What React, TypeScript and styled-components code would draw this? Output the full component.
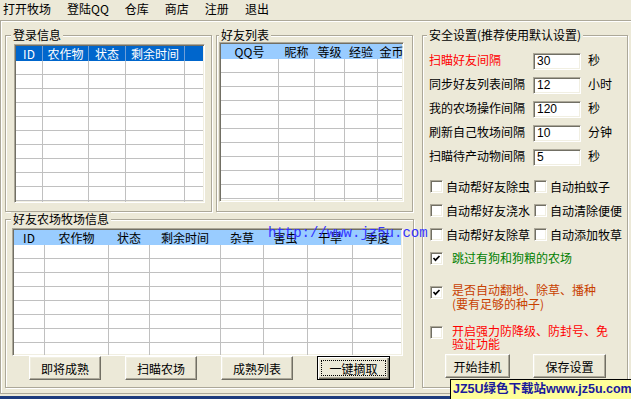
import React from "react";
import styled, { createGlobalStyle, css } from "styled-components";

const GlobalStyle = createGlobalStyle`
  html, body {
    margin: 0;
    padding: 0;
    background: #ece9d8;
  }
  body {
    font-family: "Noto Sans CJK SC", "Liberation Sans", sans-serif;
    font-size: 12px;
    color: #000;
  }
  * { box-sizing: border-box; }
`;

const sunken = css`
  border: 1px solid;
  border-color: #aca899 #fff #fff #aca899;
  box-shadow: inset 1px 1px #716f64, inset -1px -1px #f1efe2;
  background: #fff;
`;

type Col = { label: string; width: number };

const loginCols: Col[] = [
    { label: "ID", width: 27 },
    { label: "农作物", width: 46 },
    { label: "状态", width: 37 },
    { label: "剩余时间", width: 59 },
];

const friendCols: Col[] = [
    { label: "QQ号", width: 58 },
    { label: "昵称", width: 36 },
    { label: "等级", width: 30 },
    { label: "经验", width: 33 },
    { label: "金币", width: 28 },
];

const farmCols: Col[] = [
    { label: "ID", width: 31 },
    { label: "农作物", width: 64 },
    { label: "状态", width: 41 },
    { label: "剩余时间", width: 71 },
    { label: "杂草", width: 43 },
    { label: "害虫", width: 44 },
    { label: "干旱", width: 45 },
    { label: "季度", width: 50 },
];

const Window = styled.div`
  position: relative;
  width: 631px;
  height: 399px;
  display: flex;
  flex-direction: column;
  overflow: hidden;
`;

const MenuBar = styled.div`
  height: 20px;
  display: flex;
  gap: 16px;
  padding-left: 3px;
  line-height: 18px;
`;

const MenuItem = styled.span`
  white-space: nowrap;
`;

const Body = styled.div`
  height: 374px;
  flex: none;
  display: flex;
  padding: 7px 0 0 4px;
  border-top: 1px solid #aca899;
  border-left: 1px solid #aca899;
  border-bottom: 1px solid #aca899;
  box-shadow: inset 1px 1px #fff;
`;

const TaskEdge = styled.div`
  margin-top: 2px;
  height: 3px;
  background: #1d3b7d;
`;

const LeftCol = styled.div`
  width: 409px;
  flex: none;
  display: flex;
  flex-direction: column;
`;

const TopRow = styled.div`
  display: flex;
  gap: 4px;
  height: 184px;
`;

const Group = styled.fieldset<{ $w: number; $h: number }>`
  margin: 0;
  padding: 0;
  min-width: 0;
  flex: none;
  width: ${p => p.$w}px;
  height: ${p => p.$h}px;
  border: 1px solid #aca899;
  box-shadow: inset 1px 1px #fff, 1px 1px #fff;
`;

const Legend = styled.legend<{ $lm: number }>`
  margin-left: ${p => p.$lm}px;
  padding: 0 2px;
  line-height: 14px;
  background: #ece9d8;
`;

const GroupInner = styled.div<{ $pad: string }>`
  padding: ${p => p.$pad};
`;

const ListBox = styled.div<{ $w: number; $h: number }>`
  ${sunken};
  padding: 1px;
  width: ${p => p.$w}px;
  height: ${p => p.$h}px;
  overflow: hidden;
`;

const Header = styled.div<{ $dark?: boolean }>`
  display: flex;
  height: 15px;
  background: ${p => (p.$dark ? "#0066cc" : "#99ccff")};
  color: ${p => (p.$dark ? "#fff" : "#000")};
`;

const HeaderCell = styled.div<{ $w: number; $dark?: boolean }>`
  flex: none;
  width: ${p => p.$w}px;
  line-height: 15px;
  text-align: center;
  white-space: nowrap;
  overflow: hidden;
  border-right: 1px solid ${p => (p.$dark ? "#6f9fd8" : "#99ccff")};
`;

const Filler = styled.div`
  flex: 1;
`;

const Row = styled.div`
  display: flex;
  height: 14px;
  border-bottom: 1px solid #c0c0c0;
`;

const Cell = styled.div<{ $w: number }>`
  flex: none;
  width: ${p => p.$w}px;
  border-right: 1px solid #c0c0c0;
`;

const ButtonRow = styled.div<{ $gap: number; $pl: number; $mt: number }>`
  display: flex;
  gap: ${p => p.$gap}px;
  padding-left: ${p => p.$pl}px;
  margin-top: ${p => p.$mt}px;
`;

const Button = styled.button<{ $w: number; $default?: boolean }>`
  width: ${p => p.$w}px;
  height: 24px;
  padding: 0;
  font: inherit;
  color: #000;
  background: #ece9d8;
  border: 1px solid;
  border-color: #fff #716f64 #716f64 #fff;
  box-shadow: inset -1px -1px #aca899, inset 1px 1px #f1efe2;
  ${p =>
        p.$default &&
        css`
      border: 1px solid #000;
      box-shadow: inset 1px 1px #fff, inset -1px -1px #716f64, inset -2px -2px #aca899;
      outline: 1px dotted #000;
      outline-offset: -5px;
    `}
`;

const RightGroupWrap = styled.div`
  margin-left: 8px;
`;

const FormGrid = styled.div`
  display: grid;
  grid-template-columns: 104px 48px auto;
  grid-auto-rows: 24px;
  align-items: center;
`;

const FieldLabel = styled.span<{ $color?: string }>`
  color: ${p => p.$color || "#000"};
  white-space: nowrap;
  line-height: 14px;
  margin-top: -3px;
`;

const UnitLabel = styled(FieldLabel)`
  margin-left: 7px;
`;

const NumInput = styled.input`
  ${sunken};
  width: 48px;
  height: 17px;
  padding: 0 0 0 3px;
  font: 12px "Liberation Sans", sans-serif;
  color: #000;
`;

const CheckGrid = styled.div`
  display: grid;
  grid-template-columns: 104px 104px;
  grid-auto-rows: 24px;
  align-items: center;
  margin-top: 5px;
  padding-left: 1px;
`;

const CheckItem = styled.label`
  display: flex;
  align-items: center;
  gap: 3px;
  white-space: nowrap;
`;

const Box = styled.span<{ $mt?: number }>`
  ${sunken};
  flex: none;
  width: 13px;
  height: 13px;
  margin-top: ${p => p.$mt || 0}px;
  display: flex;
  align-items: center;
  justify-content: center;
`;

const LongCheck = styled.label<{ $mt: number; $lh: number; $color: string; $top?: boolean }>`
  display: flex;
  align-items: ${p => (p.$top ? "flex-start" : "center")};
  gap: 9px;
  margin-top: ${p => p.$mt}px;
  padding-left: 1px;
  min-height: 24px;
  line-height: ${p => p.$lh}px;
  color: ${p => p.$color};
  white-space: nowrap;
`;

const Watermark = styled.div`
  position: absolute;
  left: 268px;
  top: 226px;
  font: 14px "Liberation Mono", monospace;
  line-height: 14px;
  color: #3434ff;
  pointer-events: none;
`;

const Banner = styled.div`
  position: absolute;
  left: 450px;
  top: 379px;
  width: 182px;
  height: 21px;
  border: 1px solid #000;
  background: #ffff99;
  color: #1a1a9c;
  font: bold 12.5px "Liberation Sans", "Noto Sans CJK SC", sans-serif;
  line-height: 18px;
  padding-left: 2px;
  white-space: nowrap;
`;

const CheckMark = () => (
    <svg width="9" height="9" viewBox="0 0 9 9">
        <polyline points="1.5,4 3.5,6.2 7.5,2" fill="none" stroke="#000" strokeWidth="1.7" />
    </svg>
);

const ListView: React.FC<{ cols: Col[]; w: number; h: number; rows: number; dark?: boolean }> = ({
    cols,
    w,
    h,
    rows,
    dark,
}) => (
    <ListBox $w={w} $h={h}>
        <Header $dark={dark}>
            {cols.map(c => (
                <HeaderCell key={c.label} $w={c.width} $dark={dark}>
                    {c.label}
                </HeaderCell>
            ))}
            <Filler />
        </Header>
        {Array.from({ length: rows }).map((_, i) => (
            <Row key={i}>
                {cols.map(c => (
                    <Cell key={c.label} $w={c.width} />
                ))}
                <Filler />
            </Row>
        ))}
    </ListBox>
);

const settings = [
    { label: "扫瞄好友间隔", value: "30", unit: "秒", color: "#ff0000" },
    { label: "同步好友列表间隔", value: "12", unit: "小时" },
    { label: "我的农场操作间隔", value: "120", unit: "秒" },
    { label: "刷新自己牧场间隔", value: "10", unit: "分钟" },
    { label: "扫瞄待产动物间隔", value: "5", unit: "秒" },
];

const checks = ["自动帮好友除虫", "自动拍蚊子", "自动帮好友浇水", "自动清除便便", "自动帮好友除草", "自动添加牧草"];

export default function App() {
    return (
        <>
            <GlobalStyle />
            <Window>
                <MenuBar>
                    {["打开牧场", "登陆QQ", "仓库", "商店", "注册", "退出"].map(m => (
                        <MenuItem key={m}>{m}</MenuItem>
                    ))}
                </MenuBar>
                <Body>
                    <LeftCol>
                        <TopRow>
                            <Group $w={207} $h={184}>
                                <Legend $lm={5}>登录信息</Legend>
                                <GroupInner $pad="2px 0 0 8px">
                                    <ListView cols={loginCols} w={191} h={159} rows={11} dark />
                                </GroupInner>
                            </Group>
                            <Group $w={197} $h={184}>
                                <Legend $lm={2}>好友列表</Legend>
                                <GroupInner $pad="0 0 0 2px">
                                    <ListView cols={friendCols} w={185} h={160} rows={11} />
                                </GroupInner>
                            </Group>
                        </TopRow>
                        <Group $w={409} $h={176}>
                            <Legend $lm={5}>好友农场牧场信息</Legend>
                            <GroupInner $pad="2px 0 0 6px">
                                <ListView cols={farmCols} w={391} h={128} rows={9} />
                                <ButtonRow $gap={24} $pl={17} $mt={0}>
                                    <Button $w={72}>即将成熟</Button>
                                    <Button $w={72}>扫瞄农场</Button>
                                    <Button $w={72}>成熟列表</Button>
                                    <Button $w={73} $default>
                                        一键摘取
                                    </Button>
                                </ButtonRow>
                            </GroupInner>
                        </Group>
                    </LeftCol>
                    <RightGroupWrap>
                        <Group $w={206} $h={360}>
                            <Legend $lm={4}>安全设置(推荐使用默认设置)</Legend>
                            <GroupInner $pad="7px 0 0 6px">
                                <FormGrid>
                                    {settings.map(s => (
                                        <React.Fragment key={s.label}>
                                            <FieldLabel $color={s.color}>{s.label}</FieldLabel>
                                            <NumInput defaultValue={s.value} />
                                            <UnitLabel>{s.unit}</UnitLabel>
                                        </React.Fragment>
                                    ))}
                                </FormGrid>
                                <CheckGrid>
                                    {checks.map(c => (
                                        <CheckItem key={c}>
                                            <Box />
                                            {c}
                                        </CheckItem>
                                    ))}
                                </CheckGrid>
                                <LongCheck $mt={0} $lh={14} $color="#008000">
                                    <Box>
                                        <CheckMark />
                                    </Box>
                                    跳过有狗和狗粮的农场
                                </LongCheck>
                                <LongCheck $mt={13} $lh={14} $color="#c84000" $top>
                                    <Box $mt={3}>
                                        <CheckMark />
                                    </Box>
                                    <span>
                                        是否自动翻地、除草、播种
                                        <br />
                                        (要有足够的种子)
                                    </span>
                                </LongCheck>
                                <LongCheck $mt={13} $lh={13} $color="#ff0000" $top>
                                    <Box $mt={2} />
                                    <span>
                                        开启强力防降级、防封号、免
                                        <br />
                                        验证功能
                                    </span>
                                </LongCheck>
                                <ButtonRow $gap={23} $pl={16} $mt={4}>
                                    <Button $w={65}>开始挂机</Button>
                                    <Button $w={73}>保存设置</Button>
                                </ButtonRow>
                            </GroupInner>
                        </Group>
                    </RightGroupWrap>
                </Body>
                <TaskEdge />
                <Watermark>http://www.jz5u.com</Watermark>
                <Banner>JZ5U绿色下载站www.jz5u.com</Banner>
            </Window>
        </>
    );
}
